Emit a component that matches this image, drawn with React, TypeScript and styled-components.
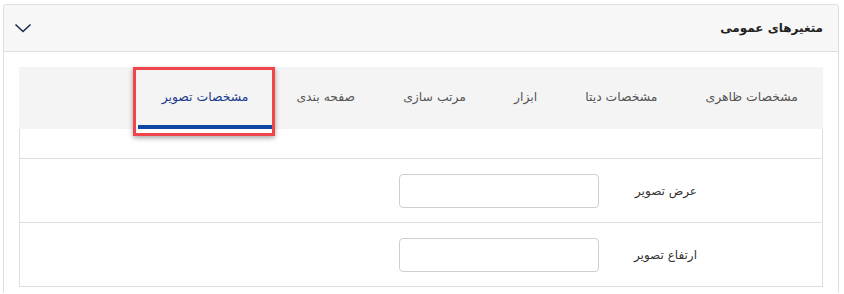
import React from "react";
import styled, { createGlobalStyle } from "styled-components";

const GlobalStyle = createGlobalStyle`
  html, body {
    margin: 0;
    padding: 0;
    background: #fff;
  }
  body {
    font-family: "DejaVu Sans", "Noto Sans", sans-serif;
    direction: rtl;
  }
`;

const Card = styled.div`
  margin: 4px 5px 0 3px;
  border: 1px solid #dedede;
  border-bottom: none;
  border-radius: 4px 4px 0 0;
  background: #fff;
  min-height: 289px;
  box-sizing: border-box;
`;

const CardHeader = styled.div`
  display: flex;
  align-items: center;
  justify-content: space-between;
  height: 46px;
  padding: 0 15px 0 10px;
  background: #f7f7f7;
  border-bottom: 1px solid #dedede;
  border-radius: 4px 4px 0 0;
`;

const Title = styled.span`
  font-size: 12px;
  font-weight: bold;
  color: #222;
`;

const Chevron = styled.svg`
  width: 18px;
  height: 10px;
`;

const CardBody = styled.div`
  padding: 15px 15px 0;
`;

const TabBar = styled.div`
  display: flex;
  height: 62px;
  background: #f4f4f4;
  padding-right: 1px;
`;

const Tab = styled.div<{ $active?: boolean }>`
  position: relative;
  display: flex;
  align-items: center;
  justify-content: center;
  padding: 0 24px;
  font-size: 12.4px;
  color: ${(p) => (p.$active ? "#1b3a8c" : "#555")};
  white-space: nowrap;
  border-bottom: 4px solid ${(p) => (p.$active ? "#0d47a1" : "transparent")};
  box-sizing: border-box;

  ${(p) =>
    p.$active &&
    `
    &::after {
      content: "";
      position: absolute;
      top: 0;
      left: -5px;
      right: -3px;
      bottom: -11px;
      border: 3px solid #f0454a;
      box-shadow: 0 2px 5px rgba(0, 0, 0, 0.35);
      pointer-events: none;
    }
  `}
`;

const Panel = styled.div`
  border: 1px solid #dedede;
  border-top: none;
`;

const Spacer = styled.div`
  height: 29px;
`;

const FieldRow = styled.div`
  display: flex;
  align-items: center;
  height: 63px;
  border-top: 1px solid #dedede;
  padding-right: 125px;
`;

const Label = styled.label`
  width: 98px;
  font-size: 12px;
  color: #333;
`;

const Input = styled.input`
  width: 200px;
  height: 34px;
  box-sizing: border-box;
  border: 1px solid #cfcfcf;
  border-radius: 4px;
  background: #fff;
  margin-top: 1px;
`;

const tabs = [
  "مشخصات ظاهری",
  "مشخصات دیتا",
  "ابزار",
  "مرتب سازی",
  "صفحه بندی",
  "مشخصات تصویر",
];

const fields = ["عرض تصویر", "ارتفاع تصویر"];

const App = () => {
  return (
    <>
      <GlobalStyle />
      <Card>
        <CardHeader>
          <Title>متغیرهای عمومی</Title>
          <Chevron viewBox="0 0 18 10" fill="none">
            <path d="M1.5 1.5 L9 8.5 L16.5 1.5" stroke="#1f2b4d" strokeWidth="1.6" />
          </Chevron>
        </CardHeader>
        <CardBody>
          <TabBar>
            {tabs.map((t, i) => (
              <Tab key={t} $active={i === tabs.length - 1}>
                {t}
              </Tab>
            ))}
          </TabBar>
          <Panel>
            <Spacer />
            {fields.map((f) => (
              <FieldRow key={f}>
                <Label>{f}</Label>
                <Input type="text" />
              </FieldRow>
            ))}
          </Panel>
        </CardBody>
      </Card>
    </>
  );
};

export default App;
